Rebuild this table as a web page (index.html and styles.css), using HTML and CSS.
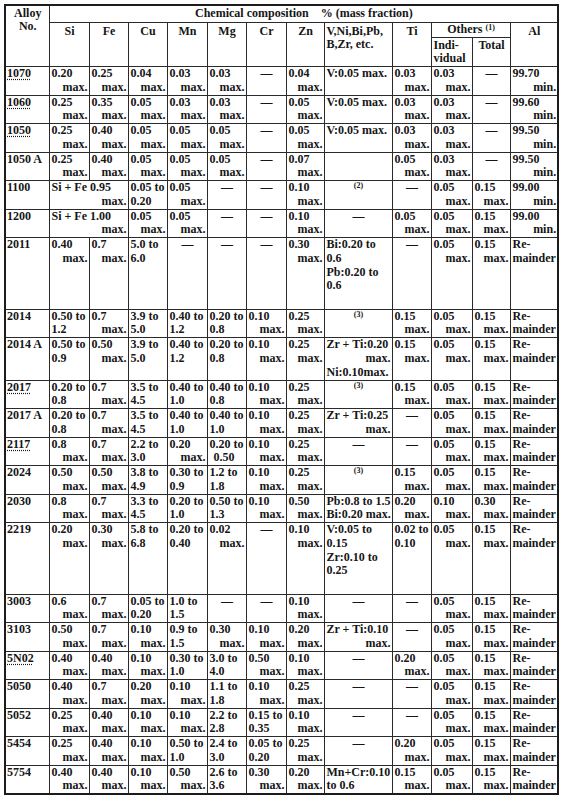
FILE: index.html
```html
<!DOCTYPE html>
<html>
<head>
<meta charset="utf-8">
<link rel="stylesheet" href="styles.css">
</head>
<body>
<table class="tbl">
<colgroup>
<col class="w44"><col class="w40"><col class="w39"><col class="w39"><col class="w40"><col class="w39"><col class="w40"><col class="w38"><col class="w68"><col class="w39"><col class="w41"><col class="w38"><col class="w48">
</colgroup>
<thead>
<tr class="h1">
<th rowspan="3" class="hc">Alloy<br>No.</th>
<th colspan="12" class="hc">Chemical composition&nbsp;&nbsp;&nbsp;&nbsp;% (mass fraction)</th>
</tr>
<tr class="h2">
<th rowspan="2" class="hc">Si</th>
<th rowspan="2" class="hc">Fe</th>
<th rowspan="2" class="hc">Cu</th>
<th rowspan="2" class="hc">Mn</th>
<th rowspan="2" class="hc">Mg</th>
<th rowspan="2" class="hc">Cr</th>
<th rowspan="2" class="hc">Zn</th>
<th rowspan="2" class="hl">V,Ni,Bi,Pb,<br>B,Zr, etc.</th>
<th rowspan="2" class="hc">Ti</th>
<th colspan="2" class="hc oth">Others <sup>(1)</sup></th>
<th rowspan="2" class="hc">Al</th>
</tr>
<tr class="h3">
<th class="hl">Indi-<br>vidual</th>
<th class="hc">Total</th>
</tr>
</thead>
<tbody>
<tr>
<td class="no"><span class="dot">1070</span></td>
<td>0.20<span class="r">max.</span></td>
<td>0.25<span class="r">max.</span></td>
<td>0.04<span class="r">max.</span></td>
<td>0.03<span class="r">max.</span></td>
<td>0.03<span class="r">max.</span></td>
<td class="c">—</td>
<td>0.04<span class="r">max.</span></td>
<td>V:0.05 max.</td>
<td>0.03<span class="r">max.</span></td>
<td>0.03<span class="r">max.</span></td>
<td class="c">—</td>
<td>99.70<span class="r">min.</span></td>
</tr>
<tr>
<td class="no"><span class="dot">1060</span></td>
<td>0.25<span class="r">max.</span></td>
<td>0.35<span class="r">max.</span></td>
<td>0.05<span class="r">max.</span></td>
<td>0.03<span class="r">max.</span></td>
<td>0.03<span class="r">max.</span></td>
<td class="c">—</td>
<td>0.05<span class="r">max.</span></td>
<td>V:0.05 max.</td>
<td>0.03<span class="r">max.</span></td>
<td>0.03<span class="r">max.</span></td>
<td class="c">—</td>
<td>99.60<span class="r">min.</span></td>
</tr>
<tr>
<td class="no"><span class="dot">1050</span></td>
<td>0.25<span class="r">max.</span></td>
<td>0.40<span class="r">max.</span></td>
<td>0.05<span class="r">max.</span></td>
<td>0.05<span class="r">max.</span></td>
<td>0.05<span class="r">max.</span></td>
<td class="c">—</td>
<td>0.05<span class="r">max.</span></td>
<td>V:0.05 max.</td>
<td>0.03<span class="r">max.</span></td>
<td>0.03<span class="r">max.</span></td>
<td class="c">—</td>
<td>99.50<span class="r">min.</span></td>
</tr>
<tr>
<td class="no">1050 A</td>
<td>0.25<span class="r">max.</span></td>
<td>0.40<span class="r">max.</span></td>
<td>0.05<span class="r">max.</span></td>
<td>0.05<span class="r">max.</span></td>
<td>0.05<span class="r">max.</span></td>
<td class="c">—</td>
<td>0.07<span class="r">max.</span></td>
<td></td>
<td>0.05<span class="r">max.</span></td>
<td>0.03<span class="r">max.</span></td>
<td class="c">—</td>
<td>99.50<span class="r">min.</span></td>
</tr>
<tr>
<td class="no">1100</td>
<td colspan="2">Si + Fe 0.95<span class="r">max.</span></td>
<td>0.05 to<br>0.20</td>
<td>0.05<span class="r">max.</span></td>
<td class="c">—</td>
<td class="c">—</td>
<td>0.10<span class="r">max.</span></td>
<td class="c"><sup>(2)</sup></td>
<td class="c">—</td>
<td>0.05<span class="r">max.</span></td>
<td>0.15<span class="r">max.</span></td>
<td>99.00<span class="r">min.</span></td>
</tr>
<tr>
<td class="no">1200</td>
<td colspan="2">Si + Fe 1.00<span class="r">max.</span></td>
<td>0.05<span class="r">max.</span></td>
<td>0.05<span class="r">max.</span></td>
<td class="c">—</td>
<td class="c">—</td>
<td>0.10<span class="r">max.</span></td>
<td class="c">—</td>
<td>0.05<span class="r">max.</span></td>
<td>0.05<span class="r">max.</span></td>
<td>0.15<span class="r">max.</span></td>
<td>99.00<span class="r">min.</span></td>
</tr>
<tr class="tall">
<td class="no">2011</td>
<td>0.40<span class="r">max.</span></td>
<td>0.7<span class="r">max.</span></td>
<td>5.0 to<br>6.0</td>
<td class="c">—</td>
<td class="c">—</td>
<td class="c">—</td>
<td>0.30<span class="r">max.</span></td>
<td>Bi:0.20 to<br>0.6<br>Pb:0.20 to<br>0.6</td>
<td class="c">—</td>
<td>0.05<span class="r">max.</span></td>
<td>0.15<span class="r">max.</span></td>
<td>Re-<br>mainder</td>
</tr>
<tr>
<td class="no">2014</td>
<td>0.50 to<br>1.2</td>
<td>0.7<span class="r">max.</span></td>
<td>3.9 to<br>5.0</td>
<td>0.40 to<br>1.2</td>
<td>0.20 to<br>0.8</td>
<td>0.10<span class="r">max.</span></td>
<td>0.25<span class="r">max.</span></td>
<td class="c"><sup>(3)</sup></td>
<td>0.15<span class="r">max.</span></td>
<td>0.05<span class="r">max.</span></td>
<td>0.15<span class="r">max.</span></td>
<td>Re-<br>mainder</td>
</tr>
<tr class="three">
<td class="no">2014 A</td>
<td>0.50 to<br>0.9</td>
<td>0.50<span class="r">max.</span></td>
<td>3.9 to<br>5.0</td>
<td>0.40 to<br>1.2</td>
<td>0.20 to<br>0.8</td>
<td>0.10<span class="r">max.</span></td>
<td>0.25<span class="r">max.</span></td>
<td>Zr + Ti:0.20<span class="r">max.</span>Ni:0.10max.</td>
<td>0.15<span class="r">max.</span></td>
<td>0.05<span class="r">max.</span></td>
<td>0.15<span class="r">max.</span></td>
<td>Re-<br>mainder</td>
</tr>
<tr>
<td class="no"><span class="dot">2017</span></td>
<td>0.20 to<br>0.8</td>
<td>0.7<span class="r">max.</span></td>
<td>3.5 to<br>4.5</td>
<td>0.40 to<br>1.0</td>
<td>0.40 to<br>0.8</td>
<td>0.10<span class="r">max.</span></td>
<td>0.25<span class="r">max.</span></td>
<td class="c"><sup>(3)</sup></td>
<td>0.15<span class="r">max.</span></td>
<td>0.05<span class="r">max.</span></td>
<td>0.15<span class="r">max.</span></td>
<td>Re-<br>mainder</td>
</tr>
<tr>
<td class="no">2017 A</td>
<td>0.20 to<br>0.8</td>
<td>0.7<span class="r">max.</span></td>
<td>3.5 to<br>4.5</td>
<td>0.40 to<br>1.0</td>
<td>0.40 to<br>1.0</td>
<td>0.10<span class="r">max.</span></td>
<td>0.25<span class="r">max.</span></td>
<td>Zr + Ti:0.25<span class="r">max.</span></td>
<td class="c">—</td>
<td>0.05<span class="r">max.</span></td>
<td>0.15<span class="r">max.</span></td>
<td>Re-<br>mainder</td>
</tr>
<tr>
<td class="no"><span class="dot">2117</span></td>
<td>0.8<span class="r">max.</span></td>
<td>0.7<span class="r">max.</span></td>
<td>2.2 to<br>3.0</td>
<td>0.20<span class="r">max.</span></td>
<td>0.20 to<br><span class="ind">0.50</span></td>
<td>0.10<span class="r">max.</span></td>
<td>0.25<span class="r">max.</span></td>
<td class="c">—</td>
<td class="c">—</td>
<td>0.05<span class="r">max.</span></td>
<td>0.15<span class="r">max.</span></td>
<td>Re-<br>mainder</td>
</tr>
<tr>
<td class="no">2024</td>
<td>0.50<span class="r">max.</span></td>
<td>0.50<span class="r">max.</span></td>
<td>3.8 to<br>4.9</td>
<td>0.30 to<br>0.9</td>
<td>1.2 to<br>1.8</td>
<td>0.10<span class="r">max.</span></td>
<td>0.25<span class="r">max.</span></td>
<td class="c"><sup>(3)</sup></td>
<td>0.15<span class="r">max.</span></td>
<td>0.05<span class="r">max.</span></td>
<td>0.15<span class="r">max.</span></td>
<td>Re-<br>mainder</td>
</tr>
<tr>
<td class="no">2030</td>
<td>0.8<span class="r">max.</span></td>
<td>0.7<span class="r">max.</span></td>
<td>3.3 to<br>4.5</td>
<td>0.20 to<br>1.0</td>
<td>0.50 to<br>1.3</td>
<td>0.10<span class="r">max.</span></td>
<td>0.50<span class="r">max.</span></td>
<td>Pb:0.8 to 1.5<br>Bi:0.20 max.</td>
<td>0.20<span class="r">max.</span></td>
<td>0.10<span class="r">max.</span></td>
<td>0.30<span class="r">max.</span></td>
<td>Re-<br>mainder</td>
</tr>
<tr class="tall">
<td class="no">2219</td>
<td>0.20<span class="r">max.</span></td>
<td>0.30<span class="r">max.</span></td>
<td>5.8 to<br>6.8</td>
<td>0.20 to<br>0.40</td>
<td>0.02<span class="r">max.</span></td>
<td class="c">—</td>
<td>0.10<span class="r">max.</span></td>
<td>V:0.05 to<br>0.15<br>Zr:0.10 to<br>0.25</td>
<td>0.02 to<br>0.10</td>
<td>0.05<span class="r">max.</span></td>
<td>0.15<span class="r">max.</span></td>
<td>Re-<br>mainder</td>
</tr>
<tr>
<td class="no">3003</td>
<td>0.6<span class="r">max.</span></td>
<td>0.7<span class="r">max.</span></td>
<td>0.05 to<br>0.20</td>
<td>1.0 to<br>1.5</td>
<td class="c">—</td>
<td class="c">—</td>
<td>0.10<span class="r">max.</span></td>
<td class="c">—</td>
<td class="c">—</td>
<td>0.05<span class="r">max.</span></td>
<td>0.15<span class="r">max.</span></td>
<td>Re-<br>mainder</td>
</tr>
<tr>
<td class="no">3103</td>
<td>0.50<span class="r">max.</span></td>
<td>0.7<span class="r">max.</span></td>
<td>0.10<span class="r">max.</span></td>
<td>0.9 to<br>1.5</td>
<td>0.30<span class="r">max.</span></td>
<td>0.10<span class="r">max.</span></td>
<td>0.20<span class="r">max.</span></td>
<td>Zr + Ti:0.10<span class="r">max.</span></td>
<td class="c">—</td>
<td>0.05<span class="r">max.</span></td>
<td>0.15<span class="r">max.</span></td>
<td>Re-<br>mainder</td>
</tr>
<tr>
<td class="no"><span class="dot">5N02</span></td>
<td>0.40<span class="r">max.</span></td>
<td>0.40<span class="r">max.</span></td>
<td>0.10<span class="r">max.</span></td>
<td>0.30 to<br>1.0</td>
<td>3.0 to<br>4.0</td>
<td>0.50<span class="r">max.</span></td>
<td>0.10<span class="r">max.</span></td>
<td class="c">—</td>
<td>0.20<span class="r">max.</span></td>
<td>0.05<span class="r">max.</span></td>
<td>0.15<span class="r">max.</span></td>
<td>Re-<br>mainder</td>
</tr>
<tr>
<td class="no">5050</td>
<td>0.40<span class="r">max.</span></td>
<td>0.7<span class="r">max.</span></td>
<td>0.20<span class="r">max.</span></td>
<td>0.10<span class="r">max.</span></td>
<td>1.1 to<br>1.8</td>
<td>0.10<span class="r">max.</span></td>
<td>0.25<span class="r">max.</span></td>
<td class="c">—</td>
<td class="c">—</td>
<td>0.05<span class="r">max.</span></td>
<td>0.15<span class="r">max.</span></td>
<td>Re-<br>mainder</td>
</tr>
<tr>
<td class="no">5052</td>
<td>0.25<span class="r">max.</span></td>
<td>0.40<span class="r">max.</span></td>
<td>0.10<span class="r">max.</span></td>
<td>0.10<span class="r">max.</span></td>
<td>2.2 to<br>2.8</td>
<td>0.15 to<br>0.35</td>
<td>0.10<span class="r">max.</span></td>
<td class="c">—</td>
<td class="c">—</td>
<td>0.05<span class="r">max.</span></td>
<td>0.15<span class="r">max.</span></td>
<td>Re-<br>mainder</td>
</tr>
<tr>
<td class="no">5454</td>
<td>0.25<span class="r">max.</span></td>
<td>0.40<span class="r">max.</span></td>
<td>0.10<span class="r">max.</span></td>
<td>0.50 to<br>1.0</td>
<td>2.4 to<br>3.0</td>
<td>0.05 to<br>0.20</td>
<td>0.25<span class="r">max.</span></td>
<td class="c">—</td>
<td>0.20<span class="r">max.</span></td>
<td>0.05<span class="r">max.</span></td>
<td>0.15<span class="r">max.</span></td>
<td>Re-<br>mainder</td>
</tr>
<tr>
<td class="no">5754</td>
<td>0.40<span class="r">max.</span></td>
<td>0.40<span class="r">max.</span></td>
<td>0.10<span class="r">max.</span></td>
<td>0.50<span class="r">max.</span></td>
<td>2.6 to<br>3.6</td>
<td>0.30<span class="r">max.</span></td>
<td>0.20<span class="r">max.</span></td>
<td>Mn+Cr:0.10<br>to 0.6</td>
<td>0.15<span class="r">max.</span></td>
<td>0.05<span class="r">max.</span></td>
<td>0.15<span class="r">max.</span></td>
<td>Re-<br>mainder</td>
</tr>
</tbody>
</table>
</body>
</html>
```
FILE: styles.css
```css
html, body {
  margin: 0;
  padding: 0;
  background: #ffffff;
}
body {
  padding: 4px 0 0 4px;
}
.tbl {
  border-collapse: collapse;
  table-layout: fixed;
  width: 555px;
  border: 2px solid #1c1c1c;
  font-family: "Liberation Serif", "Times New Roman", serif;
  font-weight: bold;
  font-size: 12px;
  line-height: 13.75px;
  color: #161616;
}
.w44 { width: 44px; }
.w40 { width: 40px; }
.w39 { width: 39px; }
.w38 { width: 38px; }
.w41 { width: 41px; }
.w48 { width: 48px; }
.w68 { width: 68px; }
.tbl th,
.tbl td {
  border: 1px solid #2a2a2a;
  padding: 0 1px 0 2px;
  vertical-align: top;
  text-align: left;
  overflow: hidden;
  white-space: nowrap;
}
.tbl td {
  height: 27.5px;
}
.tbl th {
  font-weight: bold;
  line-height: 13px;
}
.h1 th {
  padding-top: 1px;
  height: 15px;
}
.h2 th {
  padding-top: 2px;
}
.h2 th.oth {
  padding-top: 0;
  height: 14px;
}
.h3 th {
  padding-top: 1px;
  height: 27px;
}
.tbl th.hc { text-align: center; }
.tbl th.hl { text-align: left; }
.r {
  display: block;
  text-align: right;
}
.tbl td.c { text-align: center; }
.tbl td.no { padding-left: 1px; }
.dot {
  text-decoration: underline dotted;
  text-underline-offset: 2px;
}
.ind { padding-left: 4px; }
sup {
  font-size: 8px;
  line-height: 0;
  vertical-align: 3px;
}
.three td { height: 41.5px; }
.tall td { height: 70.5px; }
```
